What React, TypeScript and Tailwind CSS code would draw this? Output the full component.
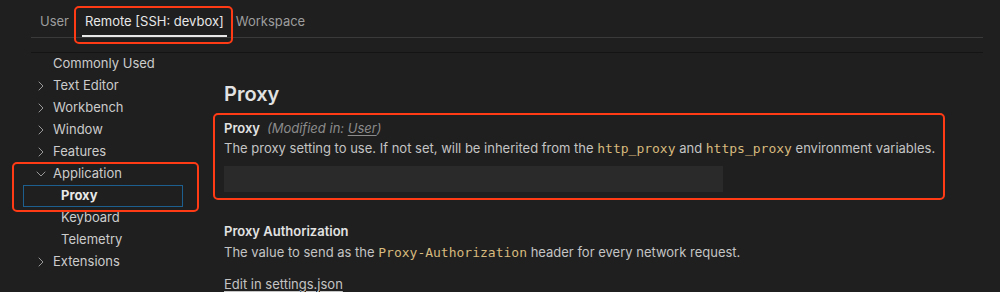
import { ChevronRight, ChevronDown } from "lucide-react"

const tree = [
  { name: "Commonly Used", chevron: null, indent: false },
  { name: "Text Editor", chevron: "right", indent: false },
  { name: "Workbench", chevron: "right", indent: false },
  { name: "Window", chevron: "right", indent: false },
  { name: "Features", chevron: "right", indent: false },
  { name: "Application", chevron: "down", indent: false },
  { name: "Proxy", chevron: null, indent: true, selected: true },
  { name: "Keyboard", chevron: null, indent: true },
  { name: "Telemetry", chevron: null, indent: true },
  { name: "Extensions", chevron: "right", indent: false },
]

function Code({ children }: { children: string }) {
  return (
    <span className="font-['DejaVu_Sans_Mono',monospace] text-[13px] text-[#d7ba7d]">{children}</span>
  )
}

export default function App() {
  return (
    <div className="relative w-[1000px] h-[292px] overflow-hidden bg-[#1f1f1f] font-['Inter','Noto_Sans',sans-serif] text-[13px] text-[#cccccc]">
      {/* Scope tabs */}
      <div className="ml-[31px] mr-[17px] flex h-[38px] items-end border-b border-[#3a3a3a]">
        <div className="ml-[9px] flex h-full items-center pt-[6px] text-[#9d9d9d]">User</div>
        <div className="ml-[13px] flex h-full items-center border-b-[2px] border-[#e7e7e7] px-[3px] pt-[8px] text-[#e7e7e7]">
          Remote [SSH: devbox]
        </div>
        <div className="ml-[9px] flex h-full items-center pt-[6px] text-[#9d9d9d]">Workspace</div>
      </div>
      <div className="h-[14px]" />
      <div className="ml-[31px] mr-[17px] border-t border-[#141414]" />

      <div className="flex">
        {/* Table of contents */}
        <div className="ml-[23px] w-[160px] shrink-0">
          {tree.map((item) => (
            <div
              key={item.name}
              className={
                "flex h-[22px] items-center " +
                (item.selected ? "border border-[#1d5f8f] font-bold text-[#e8e8e8]" : "border border-transparent")
              }
            >
              <div className={item.indent ? "w-[37px] shrink-0" : "w-[29px] shrink-0"}>
                {item.chevron === "right" && (
                  <ChevronRight size={16} strokeWidth={1.2} className="ml-[9px] text-[#b8b8b8]" />
                )}
                {item.chevron === "down" && (
                  <ChevronDown size={16} strokeWidth={1.2} className="ml-[9px] text-[#b8b8b8]" />
                )}
              </div>
              <span>{item.name}</span>
            </div>
          ))}
        </div>

        {/* Settings list */}
        <div className="ml-[41px] flex-1">
          <div className="mt-[26px] text-[20px] font-semibold leading-[30px] text-[#e2e2e2]">Proxy</div>

          <div className="mt-[9px]">
            <div className="flex items-baseline gap-[7px] leading-[20px]">
              <span className="font-semibold text-[#e2e2e2]">Proxy</span>
              <span className="italic text-[#8b8b8b]">
                (Modified in: <span className="underline underline-offset-2">User</span>)
              </span>
            </div>
            <div className="leading-[20px] text-[#c4c4c4]">
              The proxy setting to use. If not set, will be inherited from the <Code>http_proxy</Code> and{" "}
              <Code>https_proxy</Code> environment variables.
            </div>
            <div className="mt-[7px] h-[26px] w-[499px] bg-[#2a2a2a]" />
          </div>

          <div className="mt-[29px]">
            <div className="font-semibold leading-[20px] text-[#e2e2e2]">Proxy Authorization</div>
            <div className="mt-[1px] leading-[20px] text-[#c4c4c4]">
              The value to send as the <Code>Proxy-Authorization</Code> header for every network request.
            </div>
            <div className="mt-[11px] leading-[20px] text-[#c4c4c4] underline underline-offset-2">Edit in settings.json</div>
          </div>
        </div>
      </div>

      {/* Annotation boxes */}
      <div className="absolute left-[74px] top-[6px] h-[38px] w-[159px] rounded-[5px] border-[2.5px] border-[#ff3b16]" />
      <div className="absolute left-[12px] top-[162px] h-[50px] w-[187px] rounded-[5px] border-[2.5px] border-[#ff3b16]" />
      <div className="absolute left-[213px] top-[113px] h-[87px] w-[732px] rounded-[5px] border-[2.5px] border-[#ff3b16]" />
    </div>
  )
}
